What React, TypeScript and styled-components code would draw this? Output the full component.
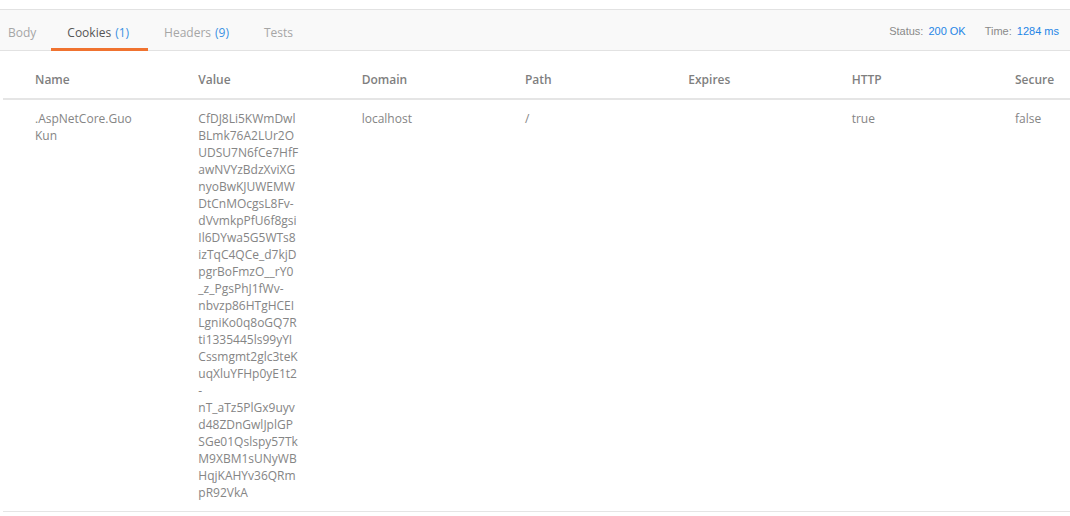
import React from "react";
import styled, { createGlobalStyle } from "styled-components";

const Global = createGlobalStyle`
  html, body { margin: 0; padding: 0; background: #ffffff; }
  body { font-family: "Open Sans", "Noto Sans", sans-serif; }
  * { box-sizing: border-box; }
`;

const Page = styled.div`
  padding-top: 9px;
  width: 1070px;
  overflow: hidden;
`;

const TabBar = styled.div`
  display: flex;
  align-items: stretch;
  justify-content: space-between;
  height: 42px;
  background: #f9f9f9;
  border-top: 1px solid #e2e2e2;
  border-bottom: 1px solid #e2e2e2;
`;

const Tabs = styled.div`
  display: flex;
  align-items: stretch;
`;

const Tab = styled.div<{ $active?: boolean; $first?: boolean }>`
  display: flex;
  align-items: center;
  padding: ${(p) => (p.$first ? "6px 15px 0 8px" : "6px 19px 0 16px")};
  margin-bottom: -1px;
  font-size: 12px;
  color: ${(p) => (p.$active ? "#555555" : "#a6a6a6")};
  border-bottom: 3px solid ${(p) => (p.$active ? "#f07330" : "transparent")};
`;

const Count = styled.span`
  color: #3b91e3;
  margin-left: 4px;
`;

const Meta = styled.div`
  display: flex;
  align-items: center;
  gap: 19px;
  padding: 1px 11px 0 0;
  font-family: "Liberation Sans", Arial, sans-serif;
  font-size: 11px;
  color: #8a8a8a;
`;

const MetaItem = styled.span`
  display: inline-flex;
  gap: 5px;
`;

const MetaValue = styled.span`
  color: #1f86e6;
`;

const Table = styled.div`
  margin-left: 3px;
  display: grid;
  grid-template-columns: repeat(6, 163.33px) 1fr;
`;

const HeadCell = styled.div`
  padding: 20px 20px 10px 32px;
  font-size: 12px;
  line-height: 17px;
  font-weight: 600;
  color: #7f7f7f;
  border-bottom: 2px solid #e5e5e5;
`;

const Cell = styled.div`
  padding: 10px 32px 10px 32px;
  font-size: 12px;
  line-height: 17px;
  color: #858585;
  word-break: break-all;
  border-bottom: 1px solid #e5e5e5;
`;

const ValueLine = styled.div`
  white-space: nowrap;
`;

const valueLines = [
  "CfDJ8Li5KWmDwl",
  "BLmk76A2LUr2O",
  "UDSU7N6fCe7HfF",
  "awNVYzBdzXviXG",
  "nyoBwKJUWEMW",
  "DtCnMOcgsL8Fv-",
  "dVvmkpPfU6f8gsi",
  "Il6DYwa5G5WTs8",
  "izTqC4QCe_d7kjD",
  "pgrBoFmzO__rY0",
  "_z_PgsPhJ1fWv-",
  "nbvzp86HTgHCEI",
  "LgniKo0q8oGQ7R",
  "ti1335445ls99yYI",
  "Cssmgmt2glc3teK",
  "uqXluYFHp0yE1t2",
  "-",
  "nT_aTz5PlGx9uyv",
  "d48ZDnGwlJplGP",
  "SGe01Qslspy57Tk",
  "M9XBM1sUNyWB",
  "HqjKAHYv36QRm",
  "pR92VkA",
];

const headers = ["Name", "Value", "Domain", "Path", "Expires", "HTTP", "Secure"];

export default function App() {
  return (
    <>
      <Global />
      <Page>
        <TabBar>
          <Tabs>
            <Tab $first>Body</Tab>
            <Tab $active>
              Cookies<Count>(1)</Count>
            </Tab>
            <Tab>
              Headers<Count>(9)</Count>
            </Tab>
            <Tab>Tests</Tab>
          </Tabs>
          <Meta>
            <MetaItem>
              Status:<MetaValue>200 OK</MetaValue>
            </MetaItem>
            <MetaItem>
              Time:<MetaValue>1284 ms</MetaValue>
            </MetaItem>
          </Meta>
        </TabBar>
        <Table>
          {headers.map((h) => (
            <HeadCell key={h}>{h}</HeadCell>
          ))}
          <Cell>.AspNetCore.GuoKun</Cell>
          <Cell>
            {valueLines.map((l, i) => (
              <ValueLine key={i}>{l}</ValueLine>
            ))}
          </Cell>
          <Cell>localhost</Cell>
          <Cell>/</Cell>
          <Cell></Cell>
          <Cell>true</Cell>
          <Cell>false</Cell>
        </Table>
      </Page>
    </>
  );
}
